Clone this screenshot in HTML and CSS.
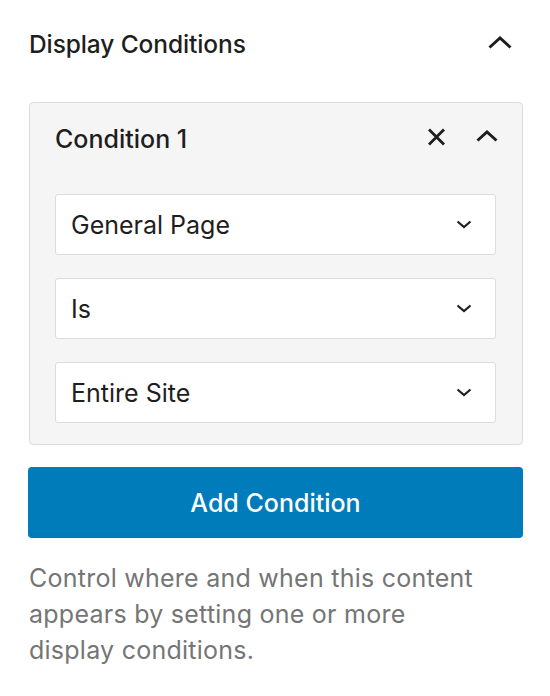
FILE: index.html
```html
<!DOCTYPE html>
<html>
<head>
<meta charset="utf-8">
<link rel="stylesheet" href="styles.css">
</head>
<body>
<div class="panel">
  <div class="panel-header">
    <h2 class="panel-title">Display Conditions</h2>
    <span class="icon-btn">
      <svg width="24" height="13" viewBox="0 0 24 13"><path d="M1.5 11.5 L12 2 L22.5 11.5" fill="none" stroke="#1e1e1e" stroke-width="3"/></svg>
    </span>
  </div>
  <div class="condition">
    <div class="condition-header">
      <span class="condition-title">Condition 1</span>
      <div class="condition-actions">
        <svg class="ico-x" width="19" height="18" viewBox="0 0 19 18"><path d="M2 1.5 L17 16.5 M17 1.5 L2 16.5" fill="none" stroke="#1e1e1e" stroke-width="2.8"/></svg>
        <svg class="ico-up" width="22" height="13" viewBox="0 0 22 13"><path d="M1.5 11.5 L11 3 L20.5 11.5" fill="none" stroke="#1e1e1e" stroke-width="3"/></svg>
      </div>
    </div>
    <div class="select"><span>General Page</span><svg width="16" height="9" viewBox="0 0 16 9"><path d="M1.5 1.5 L8 7 L14.5 1.5" fill="none" stroke="#1e1e1e" stroke-width="2.2"/></svg></div>
    <div class="select"><span>Is</span><svg width="16" height="9" viewBox="0 0 16 9"><path d="M1.5 1.5 L8 7 L14.5 1.5" fill="none" stroke="#1e1e1e" stroke-width="2.2"/></svg></div>
    <div class="select"><span>Entire Site</span><svg width="16" height="9" viewBox="0 0 16 9"><path d="M1.5 1.5 L8 7 L14.5 1.5" fill="none" stroke="#1e1e1e" stroke-width="2.2"/></svg></div>
  </div>
  <button class="add-btn">Add Condition</button>
  <p class="help">Control where and when this content appears by setting one or more display conditions.</p>
</div>
</body>
</html>
```
FILE: styles.css
```css
html, body {
  margin: 0;
  padding: 0;
  background: #fff;
}
body {
  font-family: Inter, "Noto Sans", sans-serif;
  color: #1e1e1e;
}
.panel {
  padding: 0 27px 0 28px;
}
.panel-header {
  display: flex;
  justify-content: space-between;
  align-items: center;
  height: 88px;
  padding-left: 1px;
}
.panel-title {
  margin: 0;
  font-size: 24.5px;
  font-weight: 500;
  letter-spacing: -0.1px;
}
.icon-btn {
  display: flex;
  margin-right: 11px;
  margin-top: -4px;
}
.condition {
  margin-top: 14px;
  margin-left: 1px;
  background: #f5f5f5;
  border: 1px solid #dcdcdc;
  border-radius: 4px;
  padding: 0 26px 21px 25px;
}
.condition-header {
  display: flex;
  justify-content: space-between;
  align-items: center;
  height: 72px;
  margin-bottom: 19px;
}
.condition-title {
  font-size: 25px;
  font-weight: 500;
}
.condition-actions {
  display: flex;
  align-items: center;
  gap: 30px;
  margin-right: -2px;
  margin-top: -4px;
}
.ico-up {
  margin-top: -4px;
}
.select {
  display: flex;
  justify-content: space-between;
  align-items: center;
  height: 59px;
  background: #fff;
  border: 1px solid #dcdcdc;
  border-radius: 3px;
  padding: 0 23px 0 15px;
  font-size: 25px;
  margin-bottom: 23px;
}
.select:last-child {
  margin-bottom: 0;
}
.add-btn {
  display: block;
  width: 100%;
  margin-top: 22px;
  height: 71px;
  border: 0;
  border-radius: 4px;
  background: #007cba;
  color: #fff;
  font-family: Inter, "Noto Sans", sans-serif;
  font-size: 25px;
  font-weight: 500;
}
.help {
  margin: 22px 0 0 1px;
  color: #757575;
  font-size: 25px;
  letter-spacing: 0.25px;
  line-height: 36px;
  max-width: 455px;
}
```
